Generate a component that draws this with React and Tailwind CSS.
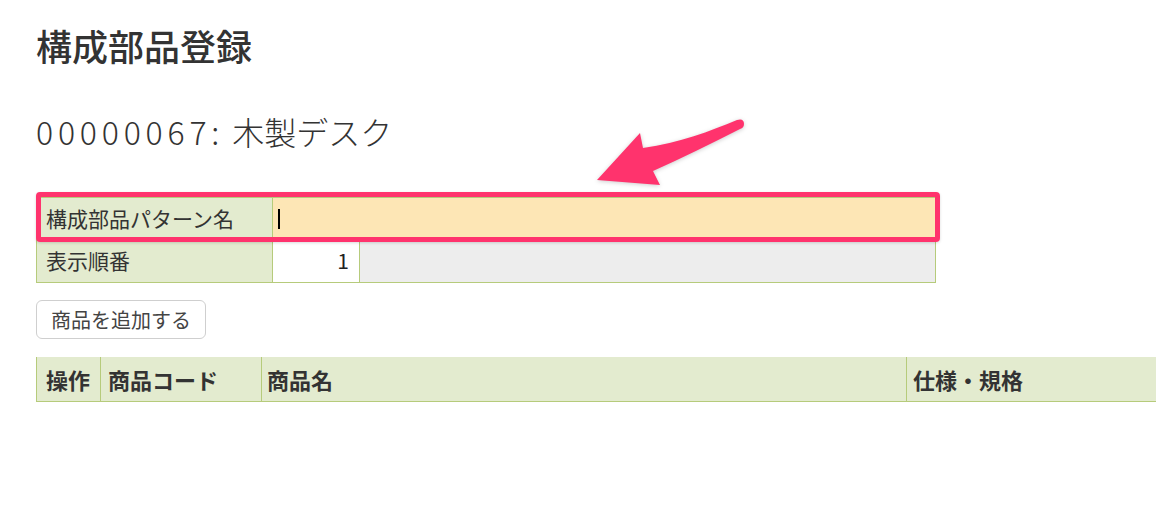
import React from 'react'

const font = { fontFamily: '"Noto Sans CJK JP", "Noto Sans", sans-serif' }

export default function App() {
  return (
    <div
      className="relative w-[1156px] h-[512px] overflow-hidden bg-white text-[#333]"
      style={font}
    >
      <div className="pl-9 pt-[23px]">
        {/* Page title */}
        <h1 className="text-[36px] font-medium leading-[44px]">構成部品登録</h1>

        {/* Product heading */}
        <h2 className="mt-[42px] flex text-[32px] font-light leading-[44px]">
          <span className="tracking-[4.8px]">00000067:</span>
          <span className="ml-[8px]">木製デスク</span>
        </h2>

        {/* Pattern form */}
        <div className="relative mt-[44px] w-[900px]">
          <div className="border border-[#b6cb7b] text-[21px]">
            <div className="flex h-[42px] border-b border-[#b6cb7b]">
              <div className="flex w-[236px] items-center border-r border-[#b6cb7b] bg-[#e3ebcf] pl-[9px]">
                構成部品パターン名
              </div>
              <div className="flex flex-1 items-center bg-[#fde6b5] pl-[5px]">
                <div className="h-[20px] w-[2px] bg-black" />
              </div>
            </div>
            <div className="flex h-[42px]">
              <div className="flex w-[236px] items-center border-r border-[#b6cb7b] bg-[#e3ebcf] pl-[9px]">
                表示順番
              </div>
              <div className="flex w-[87px] items-center justify-end border-r border-[#b6cb7b] bg-white pr-[10px] text-[#222]">
                1
              </div>
              <div className="flex-1 bg-[#ededed]" />
            </div>
          </div>

          {/* Highlight annotation */}
          <div className="pointer-events-none absolute left-0 top-[-5px] h-[50px] w-[904px] rounded-[4px] border-[5px] border-[#ff336d] shadow-[0_1px_3px_rgba(0,0,0,0.15)]" />
        </div>

        {/* Add button */}
        <button className="mt-[17px] h-[39px] w-[170px] rounded-[6px] border border-[#cfcfcf] bg-white text-[20px] text-[#444]">
          商品を追加する
        </button>

        {/* Item list header */}
        <div className="mt-[18px] flex h-[45px] w-[1300px] border-b border-l border-[#b6cb7b] bg-[#e3ebcf] text-[22px] font-bold">
          <div className="flex w-[64px] items-center border-r border-[#b6cb7b] pl-[9px]">操作</div>
          <div className="flex w-[161px] items-center border-r border-[#b6cb7b] pl-[7px]">商品コード</div>
          <div className="flex w-[645px] items-center border-r border-[#b6cb7b] pl-[5px]">商品名</div>
          <div className="flex flex-1 items-center pl-[6px]">仕様・規格</div>
        </div>
      </div>

      {/* Annotation arrow */}
      <svg
        className="pointer-events-none absolute left-0 top-0"
        width="1156"
        height="512"
        viewBox="0 0 1156 512"
      >
        <path
          d="M597 180 L640 133 L643 148 C 680 143, 710 131, 737 120 Q 744 118 744 124 Q 744 128 740 129 C 712 143, 682 158, 653 171 L660 185 Z"
          fill="#ff336d"
          style={{ filter: 'drop-shadow(0 1px 2px rgba(0,0,0,0.2))' }}
        />
      </svg>
    </div>
  )
}
